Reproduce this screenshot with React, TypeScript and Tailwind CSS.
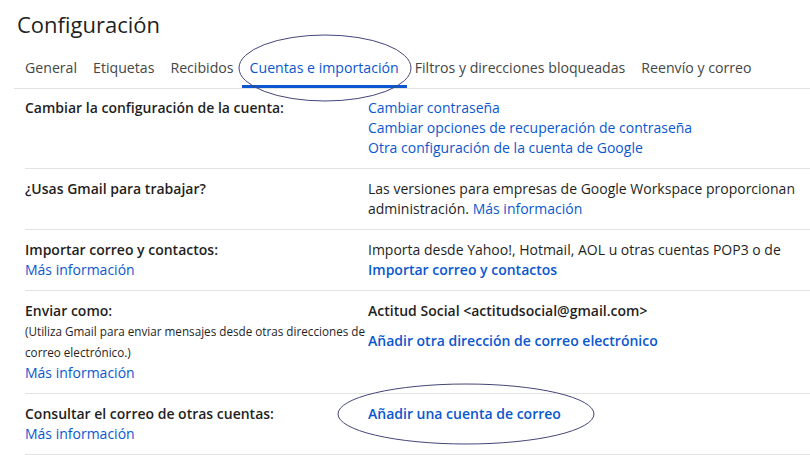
import React from "react";

const tabs = [
  "General",
  "Etiquetas",
  "Recibidos",
  "Cuentas e importación",
  "Filtros y direcciones bloqueadas",
  "Reenvío y correo",
];

const link = "text-[#0b57d0]";

function Row({
  left,
  right,
  first,
}: {
  left: React.ReactNode;
  right: React.ReactNode;
  first?: boolean;
}) {
  return (
    <div
      className={`flex border-b border-[#e3e3e3] pb-[10px] ${
        first ? "pt-[9px]" : "pt-[10px]"
      }`}
    >
      <div className="w-[343px] shrink-0">{left}</div>
      <div className="flex-1 whitespace-nowrap">{right}</div>
    </div>
  );
}

export default function App() {
  return (
    <div
      className="relative h-[455px] w-[810px] overflow-hidden bg-white text-[14px] leading-[20px] text-[#1f1f1f]"
      style={{ fontFamily: "'Open Sans', 'Liberation Sans', sans-serif" }}
    >
      {/* header */}
      <div className="flex h-[50px] items-center pb-[2px] pl-[17px] text-[22px] leading-[28px] text-[#1f1f1f]">
        Configuración
      </div>

      {/* tabs */}
      <div className="ml-[14px] flex border-b border-[#e3e3e3] pl-[3px] text-[14.15px]">
        {tabs.map((t, i) => (
          <div
            key={t}
            className={`flex h-[38px] items-center border-b-[3px] px-2 ${
              i === 3
                ? "border-[#0b57d0] text-[#0b57d0]"
                : "border-transparent text-[#444746]"
            }`}
          >
            {t}
          </div>
        ))}
      </div>

      {/* rows */}
      <div className="ml-[25px]">
        <Row
          first
          left={<div className="font-semibold">Cambiar la configuración de la cuenta:</div>}
          right={
            <div className={link}>
              <div>Cambiar contraseña</div>
              <div>Cambiar opciones de recuperación de contraseña</div>
              <div>Otra configuración de la cuenta de Google</div>
            </div>
          }
        />
        <Row
          left={<div className="font-semibold">¿Usas Gmail para trabajar?</div>}
          right={
            <div>
              <div>Las versiones para empresas de Google Workspace proporcionan</div>
              <div>
                administración. <span className={link}>Más información</span>
              </div>
            </div>
          }
        />
        <Row
          left={
            <div>
              <div className="font-semibold">Importar correo y contactos:</div>
              <div className={link}>Más información</div>
            </div>
          }
          right={
            <div>
              <div>Importa desde Yahoo!, Hotmail, AOL u otras cuentas POP3 o de</div>
              <div className={`font-semibold ${link}`}>Importar correo y contactos</div>
            </div>
          }
        />
        <Row
          left={
            <div>
              <div className="font-semibold">Enviar como:</div>
              <div className="whitespace-nowrap text-[11.7px] leading-[21px]">
                (Utiliza Gmail para enviar mensajes desde otras direcciones de
                <br />
                correo electrónico.)
              </div>
              <div className={link}>Más información</div>
            </div>
          }
          right={
            <div>
              <div className="font-semibold">Actitud Social &lt;actitudsocial@gmail.com&gt;</div>
              <div className={`mt-[10px] font-semibold ${link}`}>
                Añadir otra dirección de correo electrónico
              </div>
            </div>
          }
        />
        <Row
          left={
            <div>
              <div className="font-semibold">Consultar el correo de otras cuentas:</div>
              <div className={link}>Más información</div>
            </div>
          }
          right={<div className={`font-semibold ${link}`}>Añadir una cuenta de correo</div>}
        />
      </div>

      {/* hand-drawn annotation ellipses */}
      <svg
        className="pointer-events-none absolute left-0 top-0"
        width="810"
        height="455"
        viewBox="0 0 810 455"
      >
        <ellipse
          cx="325"
          cy="68"
          rx="86"
          ry="33"
          fill="none"
          stroke="#45457a"
          strokeWidth="1"
        />
        <ellipse
          cx="466"
          cy="414"
          rx="128"
          ry="30"
          fill="none"
          stroke="#45457a"
          strokeWidth="1"
        />
      </svg>
    </div>
  );
}
